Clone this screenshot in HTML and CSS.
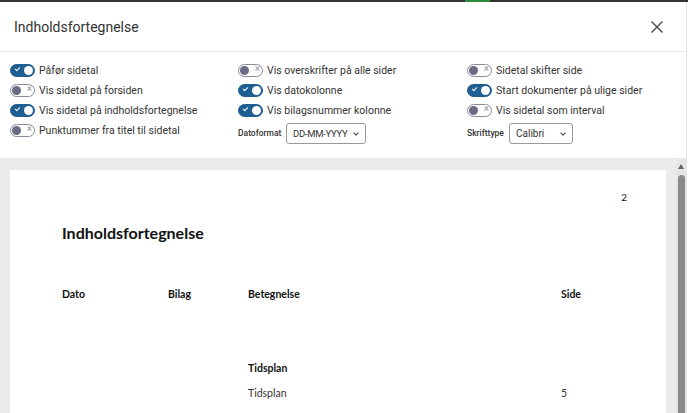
FILE: index.html
```html
<!DOCTYPE html>
<html lang="da">
<head>
    <meta charset="UTF-8">
    <title>Indholdsfortegnelse</title>
    <link rel="stylesheet" href="styles.css">
</head>
<body>
<div class="topbar"><span class="tab"></span></div>
<div class="modal">
    <div class="header">
        <h1>Indholdsfortegnelse</h1>
        <span class="close">
            <svg width="14" height="14" viewBox="0 0 14 14"><path d="M1.5 1.5 L12.5 12.5 M12.5 1.5 L1.5 12.5" stroke="#555" stroke-width="1.5"/></svg>
        </span>
    </div>

    <div class="options">
        <div class="col">
            <label class="opt"><span class="toggle on"></span>Påfør sidetal</label>
            <label class="opt"><span class="toggle"></span>Vis sidetal på forsiden</label>
            <label class="opt"><span class="toggle on"></span>Vis sidetal på indholdsfortegnelse</label>
            <label class="opt"><span class="toggle"></span>Punktummer fra titel til sidetal</label>
        </div>
        <div class="col">
            <label class="opt"><span class="toggle"></span>Vis overskrifter på alle sider</label>
            <label class="opt"><span class="toggle on"></span>Vis datokolonne</label>
            <label class="opt"><span class="toggle on"></span>Vis bilagsnummer kolonne</label>
            <div class="field">
                <span class="field-label date">Datoformat</span>
                <div class="select wide">DD-MM-YYYY<span class="chev"></span></div>
            </div>
        </div>
        <div class="col">
            <label class="opt"><span class="toggle"></span>Sidetal skifter side</label>
            <label class="opt"><span class="toggle on"></span>Start dokumenter på ulige sider</label>
            <label class="opt"><span class="toggle"></span>Vis sidetal som interval</label>
            <div class="field">
                <span class="field-label font">Skrifttype</span>
                <div class="select">Calibri<span class="chev"></span></div>
            </div>
        </div>
    </div>

    <div class="preview">
        <div class="page">
            <div class="pagenum">2</div>
            <h2>Indholdsfortegnelse</h2>
            <div class="toc-row head">
                <span>Dato</span><span>Bilag</span><span>Betegnelse</span><span>Side</span>
            </div>
            <div class="toc-row section">
                <span></span><span></span><span>Tidsplan</span><span></span>
            </div>
            <div class="toc-row">
                <span></span><span></span><span>Tidsplan</span><span>5</span>
            </div>
        </div>
        <div class="scrollbar">
            <span class="arrow"></span>
            <span class="thumb"></span>
        </div>
    </div>
</div>
</body>
</html>
```

FILE: styles.css
```css
html,
body {
    margin: 0;
    height: 100%;
    overflow: hidden;
}

body {
    font-family: Roboto, "Liberation Sans", sans-serif;
    color: #222;
    background: #fff;
}

.topbar {
    height: 2px;
    background: #333;
    position: relative;
}

.topbar .tab {
    position: absolute;
    left: 465px;
    width: 25px;
    top: 0;
    height: 2px;
    background: #2e8b3a;
}

.modal {
    width: 686px;
    border-right: 1px solid #e6e6e6;
}

.header {
    display: flex;
    align-items: center;
    justify-content: space-between;
    height: 49px;
    padding: 0 22px 0 14px;
    border-bottom: 1px solid #e3e7eb;
}

.header h1 {
    margin: 0;
    font-size: 14px;
    font-weight: 400;
    color: #333;
}

.close {
    display: flex;
}

.options {
    display: grid;
    grid-template-columns: 228px 229px 1fr;
    padding: 8px 0 13px 10px;
}

.col {
    display: flex;
    flex-direction: column;
}

.opt {
    display: flex;
    align-items: center;
    height: 20px;
    font-size: 10.5px;
    color: #333;
}

.toggle {
    position: relative;
    box-sizing: border-box;
    width: 25px;
    height: 13px;
    border-radius: 7px;
    border: 1px solid #8c8c9c;
    background: #fff;
    margin-right: 4px;
    flex: none;
}

.toggle::before {
    content: "";
    position: absolute;
    left: 1px;
    top: 1px;
    width: 9px;
    height: 9px;
    border-radius: 50%;
    background: #6b6b85;
}

.toggle::after {
    content: "\00d7";
    position: absolute;
    right: 2px;
    top: -2px;
    font-size: 10px;
    color: #999;
}

.toggle.on {
    background: #1f5e92;
    border-color: #1f5e92;
}

.toggle.on::before {
    left: auto;
    right: 1px;
    background: #fff;
}

.toggle.on::after {
    content: "";
    right: auto;
    left: 4px;
    top: 2px;
    width: 4px;
    height: 2px;
    border-left: 1.2px solid #fff;
    border-bottom: 1.2px solid #fff;
    transform: rotate(-45deg);
}

.field {
    display: flex;
    align-items: center;
    height: 24px;
    margin-top: 1px;
}

.field-label {
    font-size: 8.5px;
    font-weight: 500;
    color: #333;
    flex: none;
}

.field-label.date {
    width: 48px;
}

.field-label.font {
    width: 42px;
}

.select {
    position: relative;
    box-sizing: border-box;
    display: flex;
    align-items: center;
    flex: none;
    width: 64px;
    height: 21px;
    padding-left: 6px;
    border: 1px solid #9a9a9a;
    border-radius: 3px;
    font-size: 10px;
    color: #333;
}

.select.wide {
    width: 80px;
    font-size: 9.5px;
    letter-spacing: -0.3px;
}

.chev {
    position: absolute;
    right: 7px;
    top: 7px;
    width: 3px;
    height: 3px;
    border-right: 1.2px solid #444;
    border-bottom: 1.2px solid #444;
    transform: rotate(45deg);
}

.preview {
    display: flex;
    background: #ebebeb;
    height: 260px;
}

.page {
    width: 604px;
    background: #fff;
    margin: 12px 10px 0 10px;
    padding: 0 39px 0 52px;
    font-family: Lato, "Open Sans", sans-serif;
    color: #111;
}

.pagenum {
    text-align: right;
    font-size: 10px;
    margin-top: 21px;
    line-height: 12px;
}

.page h2 {
    margin: 20px 0 0;
    font-size: 16px;
    font-weight: 700;
    line-height: 20px;
}

.toc-row {
    display: grid;
    grid-template-columns: 106px 80px 313px 1fr;
    font-size: 10.5px;
    line-height: 14px;
}

.toc-row.head {
    font-weight: 700;
    margin-top: 44px;
}

.toc-row.section {
    font-weight: 700;
    margin-top: 60px;
}

.toc-row.section + .toc-row {
    margin-top: 11px;
    color: #333;
}

.scrollbar {
    position: relative;
    flex: none;
    width: 10px;
    background: #e6e6e6;
}

.scrollbar .arrow {
    position: absolute;
    left: 2px;
    top: 6px;
    width: 0;
    height: 0;
    border-left: 3.5px solid transparent;
    border-right: 3.5px solid transparent;
    border-bottom: 5px solid #666;
}

.scrollbar .thumb {
    position: absolute;
    left: 2px;
    top: 17px;
    bottom: 0;
    width: 7px;
    border-radius: 4px 4px 0 0;
    background: #8a8a8a;
}
```
